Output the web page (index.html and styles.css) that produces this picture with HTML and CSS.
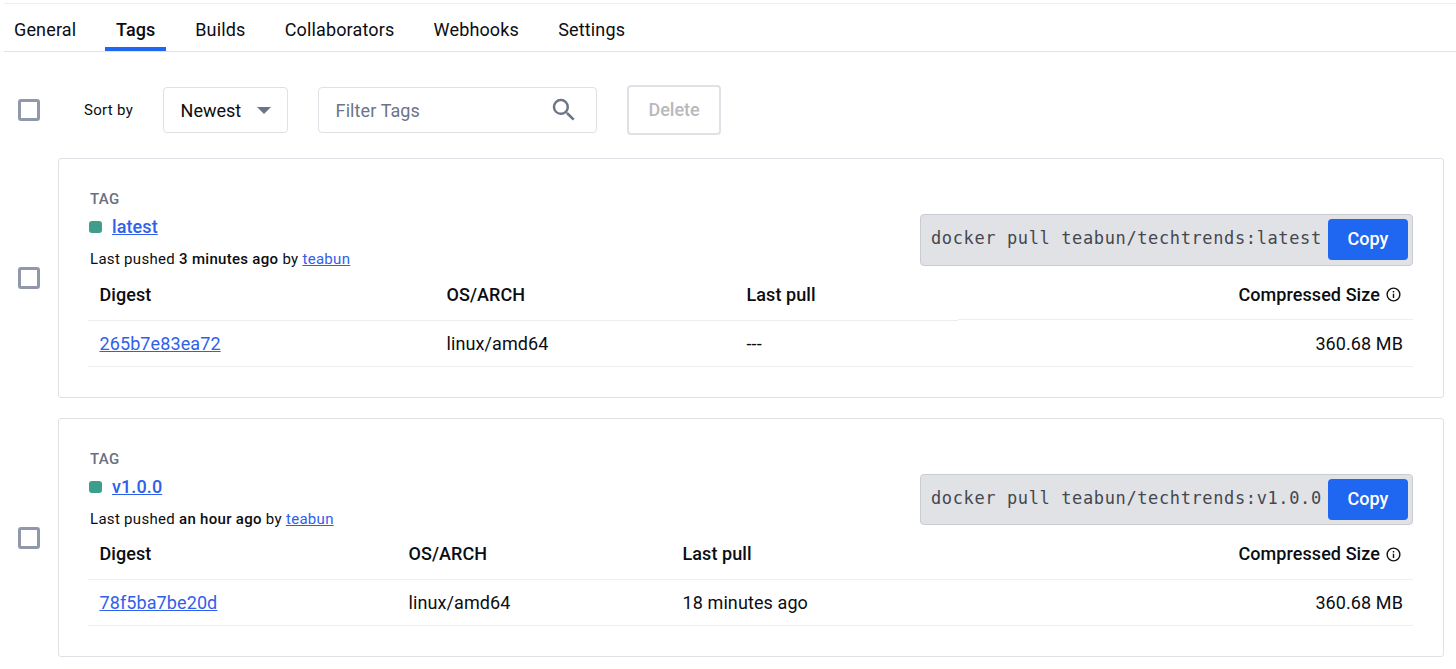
FILE: index.html
```html
<!DOCTYPE html>
<html lang="en">
<head>
    <meta charset="UTF-8">
    <title>Tags</title>
    <link rel="stylesheet" href="styles.css">
</head>
<body>
    <div class="tabs">
        <span class="tab">General</span>
        <span class="tab active">Tags</span>
        <span class="tab">Builds</span>
        <span class="tab">Collaborators</span>
        <span class="tab">Webhooks</span>
        <span class="tab">Settings</span>
    </div>

    <div class="toolbar">
        <span class="check"></span>
        <span class="sort-label">Sort by</span>
        <div class="select">Newest <span class="caret"></span></div>
        <div class="filter">
            <span>Filter Tags</span>
            <svg width="30" height="30" viewBox="0 0 24 24" fill="#6c7488"><path d="M15.5 14h-.79l-.28-.27A6.47 6.47 0 0 0 16 9.5 6.5 6.5 0 1 0 9.5 16c1.61 0 3.09-.59 4.23-1.57l.27.28v.79l5 4.99L20.49 19l-4.99-5zm-6 0C7.01 14 5 11.99 5 9.5S7.01 5 9.5 5 14 7.01 14 9.5 11.99 14 9.5 14z"/></svg>
        </div>
        <button class="delete">Delete</button>
    </div>

    <div class="row">
        <span class="check"></span>
        <div class="card">
            <div class="card-top">
                <div>
                    <div class="tag-label">TAG</div>
                    <div class="tag-name"><span class="dot"></span><a href="#">latest</a></div>
                    <div class="pushed">Last pushed <b>3 minutes ago</b> by <a href="#">teabun</a></div>
                </div>
                <div class="pull">
                    <code>docker pull teabun/techtrends:latest</code>
                    <button class="copy">Copy</button>
                </div>
            </div>
            <div class="digests first">
                <div class="th">Digest</div>
                <div class="th">OS/ARCH</div>
                <div class="th">Last pull</div>
                <div class="th size">Compressed Size <svg class="info" width="17" height="17" viewBox="0 0 24 24" fill="#111"><path d="M11 7h2v2h-2zm0 4h2v6h-2zm1-9a10 10 0 1 0 0 20 10 10 0 0 0 0-20zm0 18a8 8 0 1 1 0-16 8 8 0 0 1 0 16z"/></svg></div>
                <div class="td"><a href="#">265b7e83ea72</a></div>
                <div class="td">linux/amd64</div>
                <div class="td">---</div>
                <div class="td size">360.68 MB</div>
            </div>
        </div>
    </div>

    <div class="row">
        <span class="check"></span>
        <div class="card">
            <div class="card-top">
                <div>
                    <div class="tag-label">TAG</div>
                    <div class="tag-name"><span class="dot"></span><a href="#">v1.0.0</a></div>
                    <div class="pushed">Last pushed <b>an hour ago</b> by <a href="#">teabun</a></div>
                </div>
                <div class="pull short">
                    <code>docker pull teabun/techtrends:v1.0.0</code>
                    <button class="copy">Copy</button>
                </div>
            </div>
            <div class="digests second">
                <div class="th">Digest</div>
                <div class="th">OS/ARCH</div>
                <div class="th">Last pull</div>
                <div class="th size">Compressed Size <svg class="info" width="17" height="17" viewBox="0 0 24 24" fill="#111"><path d="M11 7h2v2h-2zm0 4h2v6h-2zm1-9a10 10 0 1 0 0 20 10 10 0 0 0 0-20zm0 18a8 8 0 1 1 0-16 8 8 0 0 1 0 16z"/></svg></div>
                <div class="td"><a href="#">78f5ba7be20d</a></div>
                <div class="td">linux/amd64</div>
                <div class="td">18 minutes ago</div>
                <div class="td size">360.68 MB</div>
            </div>
        </div>
    </div>
</body>
</html>
```

FILE: styles.css
```css
body {
    margin: 0;
    padding: 3px 12px 0 4px;
    background-color: #fff;
    color: #0b0d12;
    font-family: Roboto, Arial, sans-serif;
    font-size: 18px;
    overflow: hidden;
}
a {
    color: #2f60ec;
}
.tabs {
    display: flex;
    gap: 19.2px;
    height: 47px;
    margin-right: -12px;
    border-top: 1px solid #eceef1;
    border-bottom: 1px solid #e0e2e6;
}
.tab {
    height: 43px;
    padding: 0 10px;
    line-height: 52px;
    letter-spacing: 0.15px;
}
.tab.active {
    padding: 0 10.5px;
    font-weight: 500;
    border-bottom: 4px solid #1f66f0;
}
.toolbar {
    display: flex;
    align-items: center;
    height: 106px;
    box-sizing: border-box;
    padding: 10px 0 0 14px;
}
.check {
    flex: none;
    width: 16px;
    height: 16px;
    border: 3px solid #9298ab;
    border-radius: 3px;
}
.sort-label {
    margin-left: 44px;
    font-size: 15px;
    letter-spacing: 0.3px;
}
.select {
    display: flex;
    align-items: center;
    justify-content: space-between;
    width: 125px;
    height: 46px;
    box-sizing: border-box;
    margin-left: 30px;
    padding: 0 16px 0 16.5px;
    border: 1px solid #dfe1e6;
    border-radius: 4px;
}
.caret {
    border-left: 7px solid transparent;
    border-right: 7px solid transparent;
    border-top: 7px solid #6c7488;
}
.filter {
    display: flex;
    align-items: center;
    justify-content: space-between;
    width: 279px;
    height: 46px;
    box-sizing: border-box;
    margin-left: 30px;
    padding: 0 17px 0 16.5px;
    border: 1px solid #dfe1e6;
    border-radius: 4px;
    color: #6c7488;
    letter-spacing: 0.1px;
}
.delete {
    width: 94px;
    height: 50px;
    margin-left: 30px;
    padding: 0 0 2px;
    border: 2px solid #dfe1e6;
    border-radius: 4px;
    background-color: #fff;
    color: #b7b9bd;
    font: 500 18px Roboto, Arial, sans-serif;
}
.row {
    display: flex;
    align-items: center;
    gap: 18px;
    margin-bottom: 20px;
    padding-left: 14px;
}
.card {
    flex: 1;
    box-sizing: border-box;
    padding: 30px 30px 30px 31px;
    border: 1px solid #dfe1e6;
    border-radius: 3px;
}
.card-top {
    display: flex;
    align-items: flex-start;
    justify-content: space-between;
}
.tag-label {
    font-size: 15px;
    font-weight: 500;
    line-height: 20px;
    letter-spacing: 0.3px;
    color: #677084;
}
.tag-name {
    display: flex;
    align-items: center;
    gap: 10px;
    margin: 8px 0 0 -1px;
    line-height: 20px;
    font-weight: 500;
    letter-spacing: 0.1px;
}
.dot {
    width: 13px;
    height: 12px;
    border-radius: 3px;
    background-color: #3c9e8b;
}
.pushed {
    margin-top: 12px;
    font-size: 15px;
    line-height: 20px;
    letter-spacing: 0.3px;
}
.pushed b {
    font-weight: 500;
}
.pull {
    display: flex;
    align-items: flex-start;
    justify-content: space-between;
    width: 493px;
    height: 52px;
    box-sizing: border-box;
    margin-top: 25px;
    padding: 4px 4px 0 10px;
    border: 1px solid #c9ccd3;
    border-radius: 4px;
    background-color: #e1e2e6;
}
.pull.short {
    height: 51px;
}
.pull code {
    font-family: "DejaVu Sans Mono", monospace;
    font-size: 17px;
    line-height: 38px;
    letter-spacing: 0.62px;
    color: #44474f;
}
.copy {
    width: 80px;
    height: 41px;
    padding: 0 0 2px;
    border: none;
    border-radius: 4px;
    background-color: #1f66f0;
    color: #fff;
    font: 500 18px Roboto, Arial, sans-serif;
}
.digests {
    display: grid;
    margin: 2px 0 0 -2px;
}
.first {
    grid-template-columns: 347px 300px 223px 1fr;
}
.second {
    grid-template-columns: 309px 274px 275px 1fr;
}
.th, .td {
    padding: 0 10px 0 11.5px;
    border-bottom: 1px solid #eceef1;
}
.th {
    height: 49px;
    line-height: 47px;
    font-weight: 500;
    letter-spacing: 0.08px;
}
.td {
    height: 45px;
    line-height: 45px;
    letter-spacing: 0.1px;
}
.size {
    text-align: right;
}
.th.size {
    display: flex;
    align-items: center;
    justify-content: flex-end;
    gap: 5px;
    align-self: start;
    height: 46px;
    padding: 0 11px 2px 12px;
}
.second .th {
    height: 48px;
    line-height: 46px;
}
.second .th.size {
    height: 46px;
    padding-bottom: 2px;
}
```
